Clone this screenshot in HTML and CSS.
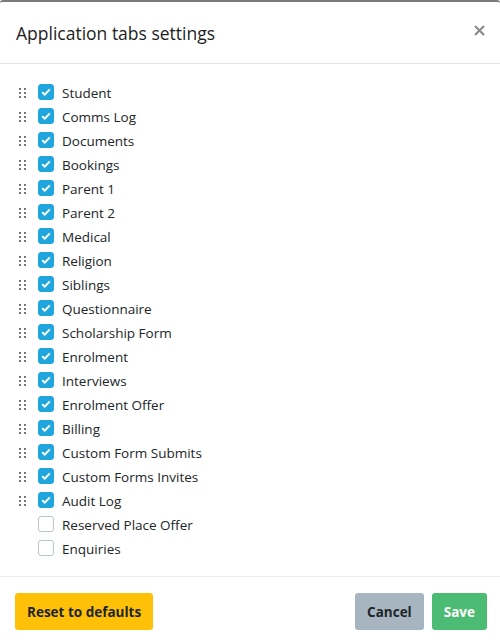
FILE: index.html
```html
<!DOCTYPE html>
<html lang="en">
<head>
  <meta charset="UTF-8" />
  <meta name="viewport" content="width=device-width, initial-scale=1.0"/>
  <title>Application tabs settings</title>
  <link rel="stylesheet" href="styles.css">
</head>
<body>
  <div class="modal">
    <div class="modal-header">
      <h5 class="modal-title">Application tabs settings</h5>
      <button class="close" aria-label="Close">
        <svg width="11" height="11" viewBox="0 0 11 11"><path d="M1 1L10 10M10 1L1 10" stroke="#888" stroke-width="2"/></svg>
      </button>
    </div>

    <div class="modal-body">
      <ul class="tab-list" id="tab-list"></ul>
    </div>

    <div class="modal-footer">
      <button class="btn btn-warning">Reset to defaults</button>
      <div class="right-buttons">
        <button class="btn btn-secondary">Cancel</button>
        <button class="btn btn-success">Save</button>
      </div>
    </div>
  </div>

  <script>
    const tabs = [
      ["Student", true], ["Comms Log", true], ["Documents", true], ["Bookings", true],
      ["Parent 1", true], ["Parent 2", true], ["Medical", true], ["Religion", true],
      ["Siblings", true], ["Questionnaire", true], ["Scholarship Form", true], ["Enrolment", true],
      ["Interviews", true], ["Enrolment Offer", true], ["Billing", true], ["Custom Form Submits", true],
      ["Custom Forms Invites", true], ["Audit Log", true],
      ["Reserved Place Offer", false], ["Enquiries", false]
    ];

    const grip = '<svg width="8" height="10" viewBox="0 0 8 10" fill="#777">' +
      '<rect x="0" y="0" width="2" height="2"/><rect x="5" y="0" width="2" height="2"/>' +
      '<rect x="0" y="4" width="2" height="2"/><rect x="5" y="4" width="2" height="2"/>' +
      '<rect x="0" y="8" width="2" height="2"/><rect x="5" y="8" width="2" height="2"/></svg>';

    const check = '<svg width="10" height="8" viewBox="0 0 10 8"><path d="M1.2 4.2L3.8 6.6L8.8 1.4" fill="none" stroke="#fff" stroke-width="2"/></svg>';

    const list = document.getElementById("tab-list");
    tabs.forEach(([name, on]) => {
      const li = document.createElement("li");
      li.className = "tab-item";
      li.innerHTML =
        '<span class="grip">' + (on ? grip : '') + '</span>' +
        '<span class="checkbox' + (on ? ' checked' : '') + '">' + (on ? check : '') + '</span>' +
        '<span class="tab-name">' + name + '</span>';
      list.appendChild(li);
    });
  </script>
</body>
</html>
```

FILE: styles.css
```css
body {
  margin: 0;
  background-color: #fff;
  font-family: "Open Sans", "Noto Sans", Arial, sans-serif;
  color: #212529;
}

.modal {
  border-top: 2px solid #7a7a7a;
  border-radius: 3px 3px 0 0;
  background-color: #fff;
}

.modal-header {
  display: flex;
  align-items: center;
  justify-content: space-between;
  height: 61px;
  padding: 0 15px 0 16px;
  border-bottom: 1px solid #e5e5e5;
}

.modal-title {
  margin: 0;
  font-size: 17.5px;
  font-weight: 400;
  color: #1d1d1d;
}

.close {
  background: none;
  border: none;
  padding: 0;
  margin-top: -4px;
  cursor: pointer;
  display: flex;
}

.modal-body {
  padding: 16px;
}

.tab-list {
  list-style: none;
  margin: 0;
  padding: 0;
}

.tab-item {
  display: flex;
  align-items: center;
  height: 24px;
  font-size: 13.5px;
  color: #212529;
}

.tab-name {
  padding-top: 1px;
}

.grip {
  display: flex;
  width: 8px;
  margin-left: 3px;
  margin-right: 11px;
  margin-top: 2px;
}

.checkbox {
  display: flex;
  align-items: center;
  justify-content: center;
  box-sizing: border-box;
  width: 16px;
  height: 16px;
  border: 1px solid #b9c6ce;
  border-radius: 3px;
  background-color: #fff;
  margin-right: 8px;
}

.checkbox.checked {
  background-color: #1fa6dd;
  border-color: #1fa6dd;
}

.modal-footer {
  display: flex;
  align-items: center;
  justify-content: space-between;
  border-top: 1px solid #e9ecef;
  padding: 16px 13px 13px 15px;
}

.right-buttons {
  display: flex;
  gap: 8px;
}

.btn {
  font-family: "Open Sans", "Noto Sans", Arial, sans-serif;
  font-size: 13.5px;
  font-weight: 700;
  height: 37px;
  padding: 0 12px;
  border: none;
  border-radius: 3px;
  cursor: pointer;
}

.btn-warning {
  background-color: #ffc107;
  color: #212529;
}

.btn-secondary {
  background-color: #a6b5bf;
  color: #212529;
}

.btn-success {
  background-color: #4cbb73;
  color: #fff;
}
```
